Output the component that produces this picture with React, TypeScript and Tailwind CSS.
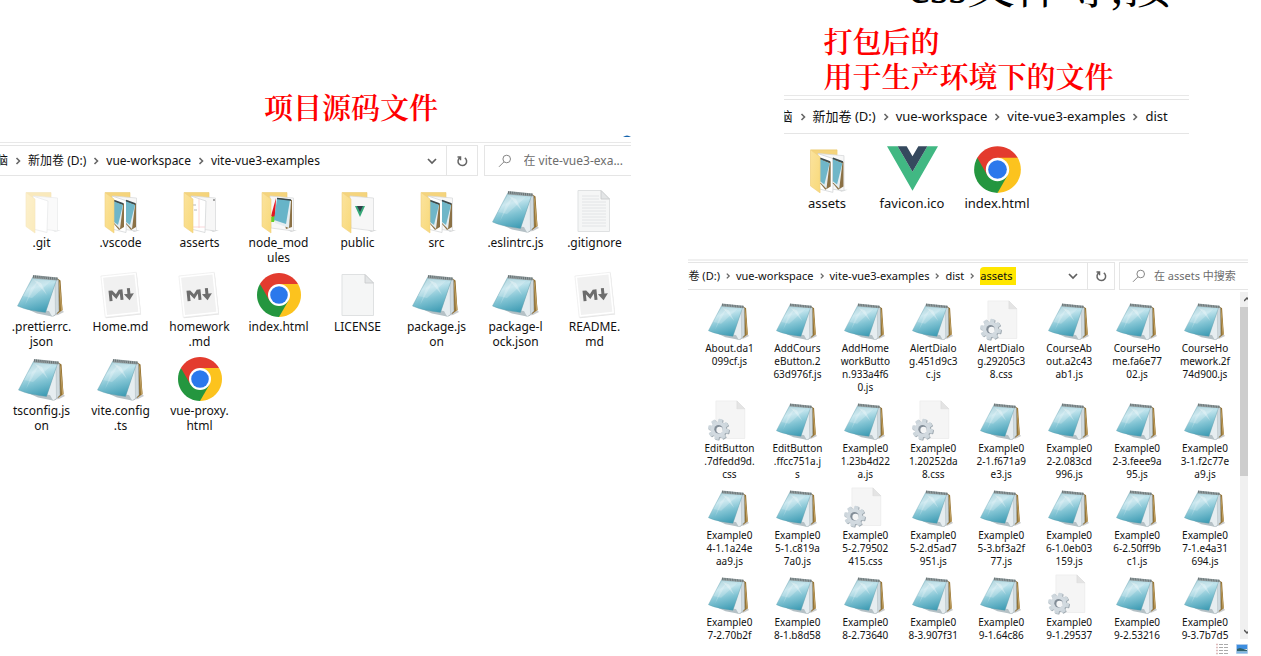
import { Fragment, useId } from "react";
import type { ReactNode } from "react";

type IconKind =
  | "notepad" | "gear" | "md" | "chrome" | "vue" | "blank" | "lines"
  | "folder-ghost" | "folder-code" | "folder-doc" | "folder-mod" | "folder-vue";

type FileItem = { label: string; icon: IconKind };

const f = (label: string, icon: IconKind = "notepad"): FileItem => ({ label, icon });

const sourceFiles: FileItem[] = [
  f(".git", "folder-ghost"),
  f(".vscode", "folder-code"),
  f("asserts", "folder-doc"),
  f("node_mod\nules", "folder-mod"),
  f("public", "folder-vue"),
  f("src", "folder-code"),
  f(".eslintrc.js"),
  f(".gitignore", "lines"),
  f(".prettierrc.\njson"),
  f("Home.md", "md"),
  f("homework\n.md", "md"),
  f("index.html", "chrome"),
  f("LICENSE", "blank"),
  f("package.js\non"),
  f("package-l\nock.json"),
  f("README.\nmd", "md"),
  f("tsconfig.js\non"),
  f("vite.config\n.ts"),
  f("vue-proxy.\nhtml", "chrome"),
];

const distFiles: FileItem[] = [
  f("assets", "folder-code"),
  f("favicon.ico", "vue"),
  f("index.html", "chrome"),
];

const assetFiles: FileItem[] = [
  f("About.da1\n099cf.js"),
  f("AddCours\neButton.2\n63d976f.js"),
  f("AddHome\nworkButto\nn.933a4f6\n0.js"),
  f("AlertDialo\ng.451d9c3\nc.js"),
  f("AlertDialo\ng.29205c3\n8.css", "gear"),
  f("CourseAb\nout.a2c43\nab1.js"),
  f("CourseHo\nme.fa6e77\n02.js"),
  f("CourseHo\nmework.2f\n74d900.js"),
  f("EditButton\n.7dfedd9d.\ncss", "gear"),
  f("EditButton\n.ffcc751a.j\ns"),
  f("Example0\n1.23b4d22\na.js"),
  f("Example0\n1.20252da\n8.css", "gear"),
  f("Example0\n2-1.f671a9\ne3.js"),
  f("Example0\n2-2.083cd\n996.js"),
  f("Example0\n2-3.feee9a\n95.js"),
  f("Example0\n3-1.f2c77e\na9.js"),
  f("Example0\n4-1.1a24e\naa9.js"),
  f("Example0\n5-1.c819a\n7a0.js"),
  f("Example0\n5-2.79502\n415.css", "gear"),
  f("Example0\n5-2.d5ad7\n951.js"),
  f("Example0\n5-3.bf3a2f\n77.js"),
  f("Example0\n6-1.0eb03\n159.js"),
  f("Example0\n6-2.50ff9b\nc1.js"),
  f("Example0\n7-1.e4a31\n694.js"),
  f("Example0\n7-2.70b2f"),
  f("Example0\n8-1.b8d58"),
  f("Example0\n8-2.73640"),
  f("Example0\n8-3.907f31"),
  f("Example0\n9-1.64c86"),
  f("Example0\n9-1.29537", "gear"),
  f("Example0\n9-2.53216"),
  f("Example0\n9-3.7b7d5"),
];

function Notepad() {
  const id = useId();
  return (
    <>
      <defs>
        <linearGradient id={id} x1="0.3" y1="0" x2="0.6" y2="1">
          <stop offset="0" stopColor="#a0cad4" />
          <stop offset="0.3" stopColor="#bfe3ec" />
          <stop offset="0.6" stopColor="#80c3d3" />
          <stop offset="1" stopColor="#3f9cb4" />
        </linearGradient>
      </defs>
      <path d="M34 45 45 39 47 41 41 44Z" fill="#c9cbcc" />
      <path d="M39 6.500 43.500 9.500 45.500 39 40 43Z" fill="#93702f" />
      <path d="M42.500 10 45.500 39 44 40 42 12Z" fill="#c0a062" />
      <path d="M38 7 41.500 9 42 40 37 45 28 42Z" fill="#cfdadf" stroke="#8d999f" strokeWidth="0.500" />
      <path d="M38 12 38.500 43.500 35.500 45.500 28 42Z" fill="#e6edf0" stroke="#aab6bb" strokeWidth="0.500" />
      <path d="M10 38 20 42.500 35 45.500 32 40Z" fill="#b5c1c6" />
      <path d="M15.500 6.500 39.500 8.500 28.500 41.500C19 40 9 39 0.500 35Z" fill={`url(#${id})`} stroke="#5f9dac" strokeWidth="0.400" />
      <path d="M16 8 34 10 15 27 6 25Z" fill="#fff" opacity="0.200" />
      <path d="M17 9 30 24 24 12Z" fill="#fff" opacity="0.300" />
      <path d="M14 17 22 9 8 34Z" fill="#fff" opacity="0.200" />
      <path d="M16 4 41 6.500 40 9.500 15.500 7.500Z" fill="#9aa5a7" />
      <path d="M16 5.500 41 8" stroke="#687274" strokeWidth="2.400" strokeDasharray="1 0.900" />
    </>
  );
}

function Page({ lined = false }: { lined?: boolean }) {
  return (
    <>
      <path d="M8 3.500H31L39.500 12V44.500H8Z" fill="#f5f6f6" stroke="#dfe1e2" />
      <path d="M31 3.500V12H39.500Z" fill="#e3e5e6" stroke="#c6c9ca" strokeWidth="0.800" />
      {lined && <path d="M12 9H29M12 12H29M12 15H36M12 18H36M12 21H36M12 24H36M12 27H36M12 30H36M12 33H36M12 36H36M12 39H36" stroke="#e2e4e6" />}
    </>
  );
}

function GearTeeth() {
  return (
    <>
      {[0, 45, 90, 135].map((a) => (
        <rect key={a} x="-2.500" y="-12" width="5" height="24" rx="1" transform={`rotate(${a + 12})`} />
      ))}
    </>
  );
}

function Gear() {
  return (
    <>
      <path d="M9 1H33L42 10V44H9Z" fill="#f5f5f5" stroke="#e8e8e8" strokeWidth="0.700" />
      <path d="M33 1V10H42Z" fill="#e4e4e4" stroke="#d8d8d8" strokeWidth="0.500" />
      <g transform="translate(12 33.500)">
        <g fill="#9fa9b1" transform="translate(1 0.800)"><GearTeeth /></g>
        <circle cx="1" cy="0.800" r="9.200" fill="#9fa9b1" />
        <g fill="#cdd6dc"><GearTeeth /></g>
        <circle r="9" fill="#d2dae0" />
        <circle r="4.800" fill="#838e98" />
        <circle cx="1.200" cy="0.800" r="3.600" fill="#f4f5f6" />
      </g>
    </>
  );
}

function Markdown() {
  return (
    <g transform="rotate(-6 24 24)">
      <path d="M6.500 4H42V45.500H6.500Z" fill="#e2e2e2" />
      <path d="M6 3H41.500V44.500H6Z" fill="#fff" stroke="#ececec" strokeWidth="0.700" />
      <path d="M8 5H39.500V42.500H8Z" fill="#f1f1f1" />
      <path d="M13.500 29V20H15L19 25 23 20H24.500V29" fill="none" stroke="#6d6d6d" strokeWidth="3" />
      <path d="M32 18V25" stroke="#6d6d6d" strokeWidth="3" />
      <path d="M27 23.500H37L32 30Z" fill="#6d6d6d" />
    </g>
  );
}

function Chrome() {
  return (
    <>
      <path d="M24 24 4.950 13A22 22 0 0 1 43.050 13Z" fill="#e33b2e" />
      <path d="M24 24 43.050 13A22 22 0 0 1 24 46Z" fill="#fcc31e" />
      <path d="M24 24 24 46A22 22 0 0 1 4.950 13Z" fill="#24963f" />
      <path d="M24 13H43.050L33.530 29.500 24 46 33.530 29.500Z" fill="#fcc31e" />
      <path d="M33.530 29.500 24 46 20 28Z" fill="#24963f" />
      <path d="M4.950 13 14.470 29.500 24 13Z" fill="#e33b2e" />
      <circle cx="24" cy="24" r="11" fill="#fff" />
      <circle cx="24" cy="24" r="8.800" fill="#2b78ec" />
    </>
  );
}

function Vue() {
  return (
    <>
      <path d="M0 2H10L24 26 38 2H48L24 44Z" fill="#41b883" />
      <path d="M10 2H18.500L24 11.500 29.500 2H38L24 26Z" fill="#35495e" />
    </>
  );
}

function MiniPad({ x }: { x: number }) {
  return (
    <>
      <path d={`M${x} 14 ${x + 10} 17 ${x + 10} 40 ${x + 5} 43 ${x} 37Z`} fill="#8b7145" />
      <path d={`M${x} 15 ${x + 9} 18 ${x + 6} 42 ${x} 36Z`} fill="#e5edf0" />
      <path d={`M${x} 14 ${x + 9} 18 ${x + 4} 38 ${x} 35Z`} fill="#6fb6c8" />
      <path d={`M${x} 13.500 ${x + 9.500} 17`} stroke="#39484d" strokeWidth="1.500" />
    </>
  );
}

function Folder({ kind }: { kind: IconKind }) {
  const id = useId();
  const ghost = kind === "folder-ghost";
  return (
    <g opacity={ghost ? 0.5 : 1}>
      <defs>
        <linearGradient id={id} x1="0" y1="0" x2="1" y2="1">
          <stop offset="0" stopColor="#fbe39d" />
          <stop offset="1" stopColor="#f8d97a" />
        </linearGradient>
      </defs>
      <path d="M34 43 43 43 37 45Z" fill="#d5d7d8" />
      <path d="M8.500 5.500H33V38H8.500Z" fill="#f5d47c" stroke="#ebcb74" strokeWidth="0.600" />
      <path d="M16 9 39.500 11V44L17 41Z" fill="#f7f7f7" stroke="#d5d7d8" strokeWidth="0.700" />
      {(kind === "folder-code" || kind === "folder-doc" || ghost) && (
        <path d="M15 9 30 14 29 45.500 15 42Z" fill="#fff" stroke="#ced1d2" strokeWidth="0.700" />
      )}
      {kind === "folder-code" && <><MiniPad x={17} /><MiniPad x={29} /></>}
      {kind === "folder-doc" && <path d="M23 12V41M17 40H29" stroke="#f6c6c8" strokeWidth="0.700" />}
      {kind === "folder-doc" && <path d="M17 18H20M18 23H21" stroke="#a5a5a5" strokeWidth="0.800" />}
      {kind === "folder-doc" && <path d="M38 12V14" stroke="#555" />}
      {kind === "folder-mod" && (
        <>
          <path d="M17 29 22 11 21 33Z" fill="#e21521" />
          <path d="M16 30 22 29 20 35 16 35Z" fill="#66ce29" />
          <path d="M24 11 38 13 38 40 32 42Z" fill="#8b7145" />
          <path d="M23 12 37 14 35 41 21 36Z" fill="#e5edf0" />
          <path d="M23 12 36 13 32 37 20 33Z" fill="#67b4c8" />
          <path d="M23 11.500 37 13" stroke="#39484d" strokeWidth="1.500" />
        </>
      )}
      {kind === "folder-vue" && (
        <>
          <path d="M21 19 26 30 31 19Z" fill="#36a878" />
          <path d="M23 19 26 25 29 19Z" fill="#313e4b" />
        </>
      )}
      <path d="M8 5.500 17 12V46L8 39.500Z" fill={`url(#${id})`} stroke="#f0d081" strokeWidth="0.600" />
    </g>
  );
}

function FileIcon({ kind, className }: { kind: IconKind; className: string }) {
  let art: ReactNode;
  if (kind === "notepad") art = <Notepad />;
  else if (kind === "gear") art = <Gear />;
  else if (kind === "md") art = <Markdown />;
  else if (kind === "chrome") art = <Chrome />;
  else if (kind === "vue") art = <Vue />;
  else if (kind === "blank") art = <Page />;
  else if (kind === "lines") art = <Page lined />;
  else art = <Folder kind={kind} />;
  return <svg viewBox="0 0 48 48" className={`shrink-0 overflow-visible ${className}`} aria-hidden="true">{art}</svg>;
}

function FileGrid({ files, grid, icon, text }: { files: FileItem[]; grid: string; icon: string; text: string }) {
  return (
    <ul className={`grid items-start ${grid}`}>
      {files.map((file) => (
        <li key={file.label} className="flex justify-center">
          <button type="button" className="flex flex-col items-center">
            <FileIcon kind={file.icon} className={icon} />
            <span className={`whitespace-pre text-center ${text}`}>{file.label}</span>
          </button>
        </li>
      ))}
    </ul>
  );
}

function Crumbs({ parts, className, gap, marked = false }: { parts: string[]; className: string; gap: string; marked?: boolean }) {
  return (
    <nav aria-label="路径" className="flex min-w-0 flex-1 items-center overflow-hidden">
      <div className={`flex shrink-0 items-center whitespace-nowrap ${className}`}>
        {parts.map((part, i) => (
          <Fragment key={part}>
            {i > 0 && (
              <svg viewBox="0 0 20 12" className={`h-3 shrink-0 ${gap}`} aria-hidden="true">
                <path d="M8.500 3 11.500 6 8.500 9" fill="none" stroke="#666" strokeWidth="1.600" />
              </svg>
            )}
            <a href="#" className={marked && i === parts.length - 1 ? "rounded-tl-sm bg-[#ffe600] pr-1 leading-[18px]" : ""}>{part}</a>
          </Fragment>
        ))}
      </div>
    </nav>
  );
}

function AddressTools({ refresh }: { refresh: string }) {
  return (
    <>
      <button type="button" aria-label="历史记录" className="flex w-7 items-center justify-center">
        <svg viewBox="0 0 12 12" className="size-3" aria-hidden="true">
          <path d="M2 4 6 8 10 4" fill="none" stroke="#606060" strokeWidth="1.700" />
        </svg>
      </button>
      <button type="button" aria-label="刷新" className={`flex items-center justify-center border-l border-[#e5e5e5] ${refresh}`}>
        <svg viewBox="0 0 14 14" className="size-3.5" aria-hidden="true">
          <path d="M9.800 3.800A4.300 4.300 0 1 1 5 3.700M2.500 3H5.500V6.200" fill="none" stroke="#666" strokeWidth="1.500" />
        </svg>
      </button>
    </>
  );
}

function SearchBox({ text, className, label }: { text: string; className: string; label: string }) {
  return (
    <label className={`flex items-center border-y border-l border-[#e5e5e5] ${className}`}>
      <svg viewBox="0 0 14 14" className="size-3.5 shrink-0" aria-hidden="true">
        <circle cx="8.700" cy="5" r="3.800" fill="none" stroke="#858585" />
        <path d="M6 7.800 1 12.800" stroke="#858585" />
      </svg>
      <input type="text" aria-label={label} placeholder={text} className="min-w-0 flex-1 bg-transparent outline-none placeholder:text-[#6d6d6d]" />
    </label>
  );
}

const redTitle = "font-semibold text-[#ff0000] text-[29px] leading-[35px] font-['Noto_Serif_CJK_SC','Noto_Sans_CJK_SC',serif]";

export default function App() {
  return (
    <main className="flex w-full overflow-hidden bg-white text-[#111] font-['Noto_Sans','Noto_Sans_CJK_SC',sans-serif]">
      <section className="w-1/2 min-w-0 overflow-hidden">
        <h2 className={`pt-[89px] pl-[264px] ${redTitle}`}>项目源码文件</h2>
        <div className="flex h-[19px] items-end justify-end border-b border-[#e8e8e8] pb-[5px]">
          <svg viewBox="0 0 8 2" className="h-0.5 w-2" aria-hidden="true"><path d="M0 2Q4-1 8 2Z" fill="#1664ad" /></svg>
        </div>
        <div className="mt-0.5 flex h-[31px] gap-1.5 text-xs">
          <div className="flex flex-1 border-y border-r border-[#e5e5e5]">
            <Crumbs parts={["脑", "新加卷 (D:)", "vue-workspace", "vite-vue3-examples"]} className="-ml-1" gap="w-5" />
            <AddressTools refresh="w-[31px]" />
          </div>
          <SearchBox text="在 vite-vue3-exa..." label="搜索 vite-vue3-examples" className="w-[147px] gap-3 pl-[13px]" />
        </div>
        <div className="pt-[11px] pl-[2px]">
          <FileGrid files={sourceFiles} grid="grid-cols-[repeat(8,79px)] gap-y-1.5" icon="size-12" text="text-xs leading-[15px]" />
        </div>
      </section>

      <section className="w-1/2 min-w-0 pr-[13px] pl-[57px]">
        <p className="flex h-[11px] items-end justify-end overflow-hidden pr-[77px] text-[48px] leading-[48px] text-black font-['Liberation_Serif','Noto_Serif_CJK_SC','Noto_Sans_CJK_SC',serif]">css文件等,按</p>
        <h2 className={`pt-3 pl-[136px] ${redTitle}`}>打包后的<br />用于生产环境下的文件</h2>
        <div className="mt-0.5 mr-[59px] ml-[96px] border-t border-[#e8e8e8] pt-[3px]">
          <div className="flex h-[35px] border-y border-[#e5e5e5] text-[13px]">
            <Crumbs parts={["脑", "新加卷 (D:)", "vue-workspace", "vite-vue3-examples", "dist"]} className="-ml-1" gap="w-5" />
          </div>
          <div className="pt-2.5 pl-px">
            <FileGrid files={distFiles} grid="grid-cols-[repeat(3,85px)]" icon="size-[51px]" text="text-[13px] leading-4" />
          </div>
        </div>

        <div className="mt-12 border-t-2 border-[#f0f0f0]">
          <div className="mt-px flex h-7 gap-1 text-[11px]">
            <div className="flex flex-1 border-y border-r border-[#e5e5e5]">
              <Crumbs parts={["新加卷 (D:)", "vue-workspace", "vite-vue3-examples", "dist", "assets"]} className="-ml-[21px]" gap="w-4" marked />
              <AddressTools refresh="w-[27px]" />
            </div>
            <SearchBox text="在 assets 中搜索" label="搜索 assets" className="w-[129px] gap-2 pl-3" />
          </div>
          <div className="flex h-[349px] overflow-hidden pt-0.5">
            <div className="min-w-0 flex-1 pt-2 pr-px pl-2">
              <FileGrid files={assetFiles} grid="grid-cols-8 gap-y-1.5" icon="size-[42px]" text="text-[10px] leading-[13px]" />
            </div>
            <div className="flex w-2 shrink-0 flex-col items-end overflow-hidden bg-[#f0f0f0]" aria-hidden="true">
              <svg viewBox="0 0 4 4" className="my-[5px] h-[5px] w-1"><path d="M0 3.500 3 .5 5 2.500" fill="none" stroke="#555" strokeWidth="1.500" /></svg>
              <div className="h-[169px] w-full shrink-0 bg-[#cdcdcd]" />
              <div className="flex-1" />
              <svg viewBox="0 0 4 4" className="my-[5px] h-[5px] w-1"><path d="M0 .5 3 3.500 5 1.500" fill="none" stroke="#555" strokeWidth="1.500" /></svg>
            </div>
          </div>
          <div className="flex justify-end gap-2 pt-1">
            <button type="button" aria-label="详细信息">
              <svg viewBox="0 0 12 12" className="size-3" aria-hidden="true">
                <path d="M0 1.500H2M0 4.500H2M0 7.500H2M0 10.500H2" stroke="#dbb" strokeWidth="1.500" />
                <path d="M3 1.500H7M8 1.500H12M3 4.500H7M8 4.500H12M3 7.500H7M8 7.500H12M3 10.500H7M8 10.500H12" stroke="#aaa" />
              </svg>
            </button>
            <button type="button" aria-label="大缩略图">
              <svg viewBox="0 0 12 12" className="size-3" aria-hidden="true">
                <path d="M.5 1.500H11.500V10.500H.5Z" fill="#fff" stroke="#aecbea" />
                <path d="M1 2H11V6H1Z" fill="#3d8ee0" />
                <path d="M1 6 4 5 11 7V8.500H1Z" fill="#2f6069" />
                <path d="M1 8.500H11V10H1Z" fill="#7db8e8" />
              </svg>
            </button>
          </div>
        </div>
      </section>
    </main>
  );
}
